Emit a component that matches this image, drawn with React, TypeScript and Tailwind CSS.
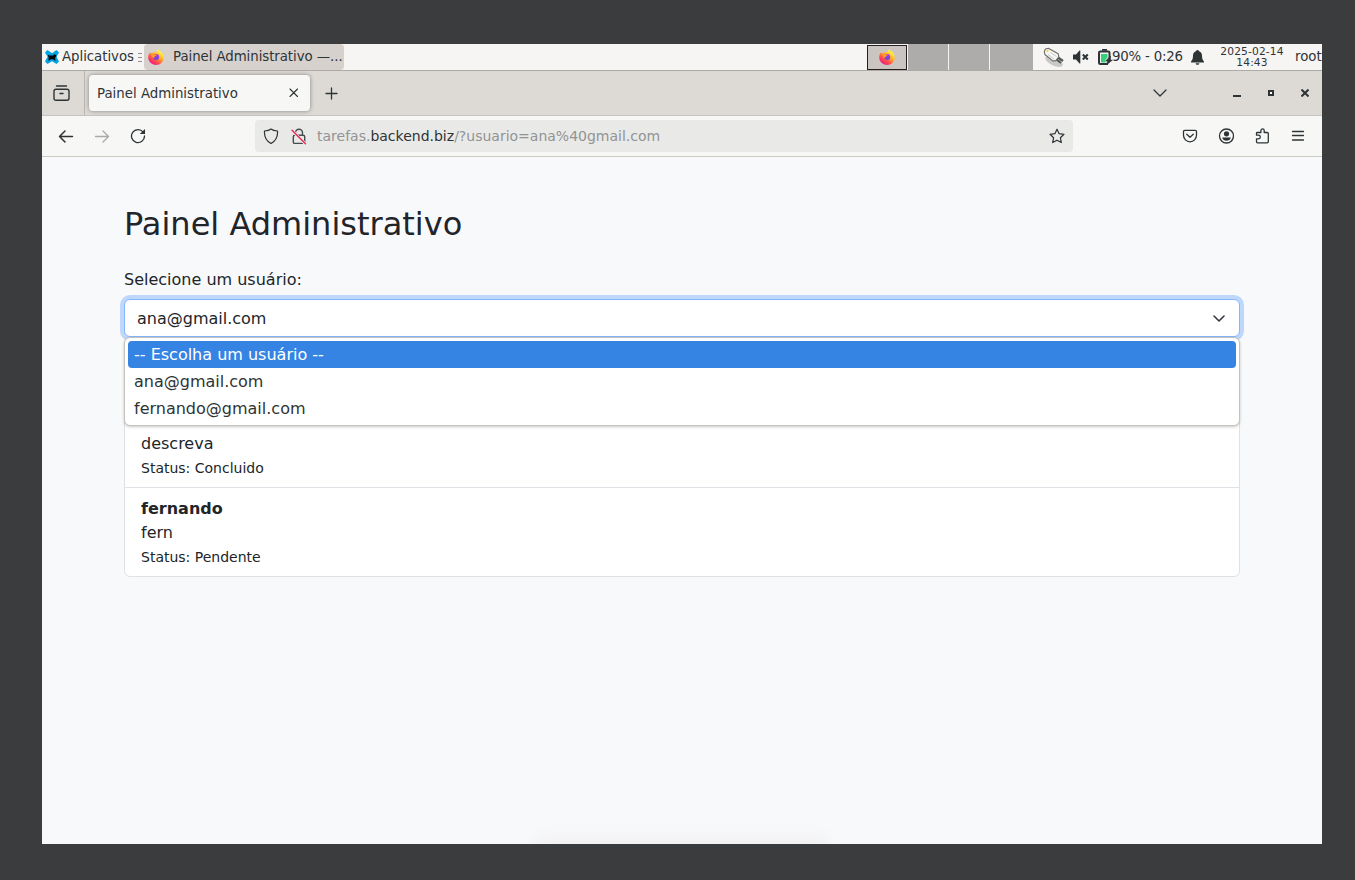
import React from "react";

type IconProps = { className?: string };

const ink = "#2e3436";

function Firefox({ className, id }: IconProps & { id: string }) {
  return (
    <svg className={className} width="16" height="16" viewBox="0 0 16 16">
      <defs>
        <linearGradient id={id} x1="0.85" y1="0.05" x2="0.2" y2="0.95">
          <stop offset="0.15" stopColor="#fff044" />
          <stop offset="0.45" stopColor="#ffa62a" />
          <stop offset="0.75" stopColor="#ff4450" />
          <stop offset="1" stopColor="#f0188f" />
        </linearGradient>
        <linearGradient id={id + "-core"} x1="0.6" y1="0" x2="0.4" y2="1">
          <stop offset="0" stopColor="#b833e1" />
          <stop offset="1" stopColor="#5b4fd6" />
        </linearGradient>
      </defs>
      <path
        d="M10.300 0c.5 1.500 1.500 2.100 2.300 3l.3-.8c.3.7 2.900 2.800 2.900 6.200 0 4.300-3.400 7.500-7.800 7.500S.2 12.700.2 8.300c0-2.600 1.200-4.500 2-5.100l.5 1.300C3.300 3.700 4 3.600 5 3.700c1.500-.6 2.300-.7 3.600-.5C8.600 2 9.200.8 10.300 0z"
        fill={"url(#" + id + ")"}
      />
      <circle cx="8.200" cy="8" r="3" fill={"url(#" + id + "-core)"} />
      <path d="M3.200 5.300c1.200-.7 2.600-.6 3.500.1l2.200.3c-.2.9-1.500 1-1.900 1.700-.2.8-1.100.8-1.700 1.600-1-.8-1.900-2-2.100-3.700z" fill="#ff9a2b" />
    </svg>
  );
}

function XfceLogo() {
  return (
    <svg width="14" height="14" viewBox="0 0 14 14">
      <path d="M0 2.500 2.500 0 7 3.300 11.500 0 14 2.500 11.500 6.700l2.500 4.800-2.500 2.500L7 11.300 2.500 14 0 11.500l2.500-4.800z" fill="#00a4e4" />
      <path d="M2.800 4.800 4.500 5.500h3.500l1.500-1.200 1.500.7.500 1.200-1.100.7-.3 2 .6 1.500-1.700-.2-.8-1H6l-1.300 1.100-1.500.1.500-2.500z" fill="#05080a" />
    </svg>
  );
}

function Pen() {
  return (
    <svg width="21" height="20" viewBox="0 0 21 20">
      <ellipse cx="11" cy="14.500" rx="9.500" ry="4" transform="rotate(25 11 14.500)" fill="#000" opacity="0.18" />
      <path d="m13 12 5 4M15 10.500l5 3.500" stroke="#555753" strokeWidth="2.200" />
      <path d="M1.300 4.500 2.500 2l2.800-.7 9.900 5.500.6 3-3 3.800-3 .3-7.900-6.400z" fill="#f6f6f5" stroke="#6a6c68" strokeWidth="1.100" strokeLinejoin="round" />
      <path d="m5 7.500 6 4.500M7.500 5.500l6 4" stroke="#b0b2ae" strokeWidth="0.700" />
      <path d="m3 4.200 1.500-1.700 1.500 1L4.200 5.400z" fill="#fcd34d" />
    </svg>
  );
}

function Speaker() {
  return (
    <svg width="16" height="14" viewBox="0 0 16 14">
      <path d="M0 4.500h3L6.500.5h.8v13h-.8L3 9.500H0z" fill={ink} />
      <path d="m9.800 4.500 5 5m0-5-5 5" stroke={ink} strokeWidth="2" />
    </svg>
  );
}

function Battery() {
  return (
    <svg width="15" height="16" viewBox="0 0 15 16">
      <path d="M4 1.800V0h5v1.800" fill={ink} />
      <rect x="1" y="2.500" width="10.500" height="12.500" rx="1.300" fill="#f6f5f4" stroke={ink} strokeWidth="2" />
      <path d="M3 5h6.500v3.500L7 11l.8 2.500H3z" fill="#33d17a" />
      <path d="M10 9h5v7h-5z" fill="#f6f5f4" />
      <path d="M12.500 7 7.500 12h2L8.500 16l6-5H12.500z" fill={ink} stroke={ink} strokeWidth="0.500" />
    </svg>
  );
}

function Bell() {
  return (
    <svg width="13" height="15" viewBox="0 0 13 15">
      <path d="M6.500 0c.8 0 1.200.5 1.200 1.100C9.800 1.700 11 3.400 11 5.500c0 3 .5 4.500 2 6v1H0v-1c1.500-1.500 2-3 2-6 0-2.100 1.200-3.800 3.300-4.400C5.300.5 5.700 0 6.500 0zM4.700 13.300h3.600c0 1-.8 1.500-1.800 1.500s-1.800-.5-1.800-1.500z" fill={ink} />
    </svg>
  );
}

function Line({ d, w = 16, h = 16, sw = 1.3, color = ink, className }: { d: string; w?: number; h?: number; sw?: number; color?: string; className?: string }) {
  return (
    <svg width={w} height={h} viewBox={"0 0 " + w + " " + h} fill="none" stroke={color} strokeWidth={sw} strokeLinecap="round" strokeLinejoin="round" className={"shrink-0 " + (className ?? "")}>
      <path d={d} />
    </svg>
  );
}

function DesktopPanel() {
  return (
    <div className="flex h-[27px] shrink-0 border-b border-[#aeaaa6] bg-[#f6f5f4] text-[13.333px] leading-[26px] whitespace-nowrap">
      <div className="flex w-[102px] shrink-0 items-center pl-[3px]">
        <XfceLogo />
        <span className="ml-[3px] w-[75px] tracking-[-0.04px]">Aplicativos</span>
        <span className="ml-px flex h-[9px] w-1 flex-col justify-between">
          <i className="h-px bg-[#8f9090]" />
          <i className="h-px bg-[#8f9090]" />
          <i className="h-px bg-[#8f9090]" />
        </span>
      </div>
      <div className="flex w-[200px] shrink-0 items-center rounded-[4px] bg-[#d6d1cd] pl-1">
        <Firefox id="task-fox" />
        <span className="ml-[9px] tracking-[-0.06px]">Painel Administrativo —...</span>
      </div>
      <div className="ml-[523px] flex w-[166px] shrink-0 gap-px">
        <div className="mt-px -mr-px flex w-[40px] items-center justify-center border border-[#241f20] bg-[#cac5c1] pb-px">
          <Firefox id="pager-fox" />
        </div>
        <div className="ml-px w-[40px] bg-[#aeacaa]" />
        <div className="w-[40px] bg-[#aeacaa]" />
        <div className="w-[43px] bg-[#aeacaa]" />
      </div>
      <div className="flex flex-1 items-center">
        <span className="ml-[10px] w-[30px]"><Pen /></span>
        <span className="w-[25px]"><Speaker /></span>
        <span className="w-[14px]"><Battery /></span>
        <span className="w-[79px] tracking-[-0.2px]">90% - 0:26</span>
        <span className="w-[13px]"><Bell /></span>
        <span className="ml-[13px] w-[70px] text-center text-[10.667px] leading-[11px] tracking-[0.15px]">2025-02-14<br />14:43</span>
        <span className="ml-[8px]">root</span>
      </div>
    </div>
  );
}

function TabStrip() {
  return (
    <div className="flex h-[45px] shrink-0 items-center border-b border-[#c8c3be] bg-[#dddad5] text-[13.333px]">
      <div className="flex h-full w-[43px] shrink-0 items-center justify-center border-r border-[#b9b4af] pr-[3px]">
        <Line d="M3.500 1h10M1 6.300q0-2 2-2h11q2 0 2 2v6.900q0 2-2 2H3q-2 0-2-2zM7 8.500h3" w={17} h={16} sw={1.4} />
      </div>
      <div className="ml-[4px] flex h-[36px] w-[221px] shrink-0 items-center rounded-[4px] bg-[#f7f7f6] pl-[8px] shadow-[0_0_4px_rgba(0,0,0,0.4)]">
        <span className="w-[192px] pt-0.5">Painel Administrativo</span>
        <Line d="m1 1 7.500 7.500M8.500 1 1 8.500" w={10} h={10} sw={1.1} />
      </div>
      <Line d="M6.500 1v11M1 6.500h11" w={13} h={13} className="ml-[15px]" />
      <Line d="M1 1l6 6 6-6" w={14} h={8} className="ml-[815px]" />
      <svg width="8" height="10" viewBox="0 0 8 10" className="ml-[66px]"><path d="M0 7h8v2H0z" fill={ink} /></svg>
      <svg width="6" height="6" viewBox="0 0 6 6" className="ml-[27px]"><path d="M1 1h4v4H1z" fill="#fff" stroke={ink} strokeWidth="2" /></svg>
      <svg width="8" height="8" viewBox="0 0 8 8" className="ml-[27px]"><path d="m.5.5 7 7m0-7-7 7" stroke={ink} strokeWidth="2" /></svg>
    </div>
  );
}

function Toolbar() {
  return (
    <div className="flex h-[41px] shrink-0 items-center border-b border-[#ccc8c3] bg-[#f7f7f6]">
      <Line d="M14.500 7.500H1.500M7 2 1.500 7.500 7 13" h={15} sw={1.5} className="ml-[16px]" />
      <Line d="M1.500 7.500h13M9 2l5.500 5.500L9 13" h={15} sw={1.3} color="#a8aaa9" className="ml-[20px]" />
      <svg width="16" height="16" viewBox="0 0 16 16" className="ml-[20px]" fill="none">
        <path d="M13.200 4.200A6.500 6.500 0 1 0 14.500 8" stroke={ink} strokeWidth="1.300" strokeLinecap="round" />
        <path d="M15 1v5H9.800z" fill={ink} />
      </svg>
      <div className="ml-[109px] flex h-8 w-[818px] shrink-0 items-center rounded-[4px] bg-[#e9e9e8]">
        <Line d="M8 1C6.500 2.200 4.200 2.800 1.500 3c-.4 5 1.800 9.800 6.500 12.500C12.700 12.800 14.900 8 14.500 3 11.800 2.800 9.500 2.200 8 1z" className="ml-2" sw={1.2} />
        <svg width="16" height="17" viewBox="0 0 16 17" fill="none" className="ml-[12px]">
          <path d="M4.500 7V4.700a3.500 3.500 0 0 1 7 0V7M3.800 7.200h8.400q1.500 0 1.500 1.500v5.200q0 1.500-1.500 1.500H3.800q-1.500 0-1.500-1.500V8.700q0-1.500 1.500-1.500z" stroke="#454b4d" strokeWidth="1.400" />
          <path d="M.8 2.200 14.500 16" stroke="#e9e9e8" strokeWidth="3" />
          <path d="M1 2.200 14.500 15.800" stroke="#ee2050" strokeWidth="1.300" strokeLinecap="round" />
        </svg>
        <span className="ml-[10px] w-[732px] text-[14px] text-[#929493]">tarefas.<span className="text-[#2e3436]">backend.biz</span>/?usuario=ana%40gmail.com</span>
        <Line d="m8 1.200 2.100 4.500 4.900.6-3.600 3.400.9 4.900L8 12.200l-4.300 2.400.9-4.900L1 6.300l4.900-.6z" sw={1.2} />
      </div>
      <Line d="M2.800 2.300h10.400q1.300 0 1.300 1.300v3.700a6.500 6.500 0 0 1-13 0V3.600q0-1.300 1.300-1.300zM4.700 6.200 8 9.200l3.300-3" className="ml-[109px]" />
      <svg width="16" height="16" viewBox="0 0 16 16" className="ml-[20px]">
        <circle cx="8.500" cy="8" r="7" fill="none" stroke={ink} strokeWidth="1.300" />
        <circle cx="8.500" cy="5.800" r="2.600" fill={ink} />
        <path d="M4.200 9.500h8.600a4.500 4.500 0 0 1-4.300 3.200 4.500 4.500 0 0 1-4.300-3.200z" fill={ink} />
      </svg>
      <Line d="M2.500 14.800q-1 0-1-1v-3h2a1.600 1.600 0 0 0 0-3.600h-2V5.300q0-.8.8-.8h3.600V2.600a1.600 1.600 0 0 1 3.300 0v1.900h3q1.100 0 1.100 1.100v8q0 1.200-1.200 1.200z" className="ml-[21px]" />
      <Line d="M1.500 1.500h11M1.500 5.500h11M1.500 10h11" w={14} h={12} className="ml-[20px]" />
    </div>
  );
}

const options = ["-- Escolha um usuário --", "ana@gmail.com", "fernando@gmail.com"];

const tasks = [
  { title: "", text: "descreva", status: "Concluido" },
  { title: "fernando", text: "fern", status: "Pendente" },
];

function AdminPage() {
  return (
    <main className="relative flex-1 overflow-hidden bg-[#f8f9fb] px-[82px] pt-12 text-[16px] leading-6 text-[#212529]">
      <h1 className="text-[32px] leading-[38px]">Painel Administrativo</h1>
      <p className="mt-[25px]">Selecione um usuário:</p>
      <div className="relative mt-[7px]">
        <div className="flex h-[38px] items-center justify-between rounded-[6px] border border-[#86b7fe] bg-white pr-[14px] pl-3 shadow-[0_0_0_4px_#bfd7fb]">
          <span className="pt-0.5">ana@gmail.com</span>
          <Line d="m1 1 5 5 5-5" w={12} h={7} sw={1.6} color="#343a40" />
        </div>
        <ul className="absolute top-[38px] left-0 z-10 h-[89px] w-full rounded-[6px] border border-[#c6c2bd] bg-white p-[3px] text-[#2e3436] shadow-[0_1px_3px_rgba(0,0,0,0.22)]">
          {options.map((option, i) => (
            <li key={option} className={i === 0 ? "h-[27px] rounded-[4px] bg-[#3584e4] px-1.5 leading-[27px] text-white" : "h-[27px] px-1.5 leading-[27px]"}>
              {option}
            </li>
          ))}
        </ul>
      </div>
      <ul className="mt-[61px] divide-y divide-[#dee2e6] rounded-[6px] border border-[#dee2e6] bg-white">
        {tasks.map((task) => (
          <li key={task.text} className="px-4 pt-[9px] pb-[7px]">
            <div className="h-6 font-bold">{task.title}</div>
            <p>{task.text}</p>
            <p className="text-[14px]">Status: {task.status}</p>
          </li>
        ))}
      </ul>
      <div className="absolute bottom-[-13px] left-[500px] h-[12px] w-[280px] shadow-[0_0_16px_6px_rgba(225,220,212,0.3)]" />
    </main>
  );
}

export default function App() {
  return (
    <div className="h-[880px] w-[1355px] overflow-hidden bg-[#3b3c3e] pt-[44px] pl-[42px] font-['DejaVu_Sans',sans-serif] text-[#2e3436]">
      <div className="flex h-[800px] w-[1280px] flex-col overflow-hidden">
        <DesktopPanel />
        <TabStrip />
        <Toolbar />
        <AdminPage />
      </div>
    </div>
  );
}
